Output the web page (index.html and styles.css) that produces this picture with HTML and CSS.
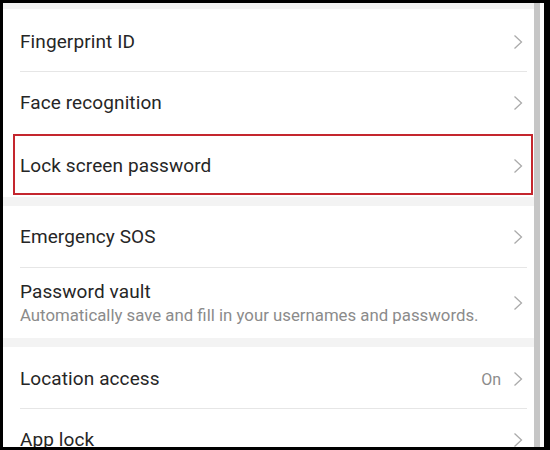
FILE: index.html
```html
<!DOCTYPE html>
<html lang="en">
<head>
<meta charset="utf-8">
<title>Security settings</title>
<link rel="stylesheet" href="styles.css">
</head>
<body>
<div class="frame">
  <div class="screen">
    <div class="list">
      <div class="gap gap-top"></div>
      <div class="row row-lg row-first">
        <span class="title">Fingerprint ID</span>
        <svg class="chev" viewBox="0 0 10 16"><polyline points="1.5,1.5 8.5,8 1.5,14.5"/></svg>
      </div>
      <div class="divider"></div>
      <div class="row row-lg">
        <span class="title">Face recognition</span>
        <svg class="chev" viewBox="0 0 10 16"><polyline points="1.5,1.5 8.5,8 1.5,14.5"/></svg>
      </div>
      <div class="divider"></div>
      <div class="row row-lg">
        <span class="title">Lock screen password</span>
        <svg class="chev" viewBox="0 0 10 16"><polyline points="1.5,1.5 8.5,8 1.5,14.5"/></svg>
      </div>
      <div class="gap"></div>
      <div class="row">
        <span class="title">Emergency SOS</span>
        <svg class="chev" viewBox="0 0 10 16"><polyline points="1.5,1.5 8.5,8 1.5,14.5"/></svg>
      </div>
      <div class="divider"></div>
      <div class="row row-two">
        <div class="texts">
          <span class="title">Password vault</span>
          <span class="sub">Automatically save and fill in your usernames and passwords.</span>
        </div>
        <svg class="chev" viewBox="0 0 10 16"><polyline points="1.5,1.5 8.5,8 1.5,14.5"/></svg>
      </div>
      <div class="gap"></div>
      <div class="row row-first">
        <span class="title">Location access</span>
        <span class="value">On</span>
        <svg class="chev" viewBox="0 0 10 16"><polyline points="1.5,1.5 8.5,8 1.5,14.5"/></svg>
      </div>
      <div class="divider"></div>
      <div class="row">
        <span class="title">App lock</span>
        <svg class="chev" viewBox="0 0 10 16"><polyline points="1.5,1.5 8.5,8 1.5,14.5"/></svg>
      </div>
    </div>
    <div class="gutter">
      <div class="bar"></div>
    </div>
    <div class="highlight"></div>
  </div>
</div>
</body>
</html>
```

FILE: styles.css
```css
* { box-sizing: border-box; }
html, body { margin: 0; padding: 0; }
body {
  background: #000;
  font-family: Roboto, "Noto Sans", "Liberation Sans", sans-serif;
}
.frame {
  width: 550px;
  height: 450px;
  background: #000;
  padding: 3px 6px 3px 3px;
  display: flex;
}
.screen {
  flex: 1;
  display: flex;
  background: #fff;
  overflow: hidden;
  position: relative;
}
.list {
  flex: 1;
  display: flex;
  flex-direction: column;
}
.gap {
  height: 9px;
  flex: none;
  background: #f3f3f3;
}
.gap-top { height: 6px; }
.row {
  flex: none;
  height: 61px;
  display: flex;
  align-items: center;
  padding: 0 11px 0 17px;
}
.row-lg { height: 62px; }
.row-first { padding-top: 3px; }
.row-two { height: 70px; }
.title {
  flex: 1;
  font-size: 19px;
  color: #262626;
  line-height: 24px;
  letter-spacing: 0.1px;
}
.texts {
  flex: 1;
  display: flex;
  flex-direction: column;
}
.sub {
  font-size: 16.8px;
  color: #8b8b8b;
  line-height: 22px;
}
.value {
  font-size: 16px;
  color: #8b8b8b;
  margin-right: 12px;
}
.chev {
  width: 10px;
  height: 16px;
  flex: none;
}
.chev polyline {
  fill: none;
  stroke: #ababab;
  stroke-width: 1.3;
}
.divider {
  flex: none;
  height: 1px;
  background: #e6e6e6;
  margin: 0 7px 0 17px;
}
.gutter {
  width: 10px;
  flex: none;
  background: #fafafa;
  display: flex;
}
.bar {
  width: 6px;
  background: #c6c6c6;
}
.highlight {
  position: absolute;
  left: 10px;
  top: 131px;
  width: 520px;
  height: 61px;
  border: 2px solid #c4262e;
}
```
